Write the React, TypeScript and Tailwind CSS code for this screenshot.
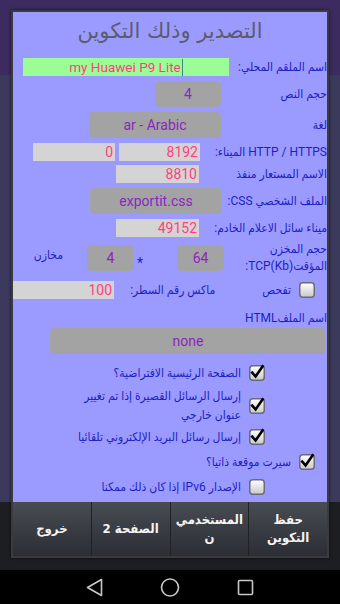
import React from "react";

function Check({ checked }: { checked: boolean }) {
  return (
    <svg width="16" height="16" viewBox="0 0 16 16" className="shrink-0 overflow-visible">
      <defs>
        <linearGradient id="cbg" x1="0" y1="0" x2="0" y2="1">
          <stop offset="0" stopColor="#ffffff" />
          <stop offset="1" stopColor="#c9c9c9" />
        </linearGradient>
      </defs>
      <rect x="0.75" y="0.75" width="14.5" height="14.5" rx="3" fill="url(#cbg)" stroke="#6a6a7a" strokeWidth="1.5" />
      {checked && (
        <path d="M3.2 7.6 L6.6 11.4 L13.6 1.4" fill="none" stroke="#000" strokeWidth="2.6" strokeLinecap="square" />
      )}
    </svg>
  );
}

const label = "text-[12px] leading-[16px] text-[#1e1ec4] whitespace-nowrap";
const grayBox = "flex h-[26px] shrink-0 items-center justify-center rounded-[5px] bg-[#a3a3a3] text-[14px] text-[#8a26c0]";
const input = "flex h-[18px] shrink-0 items-center justify-end bg-[#d4d4d4] pr-[2px] text-[14px] text-[#ff3f7f]";

export default function App() {
  return (
    <div className="relative h-[604px] w-[340px] overflow-hidden font-[family-name:Roboto,'DejaVu_Sans_Condensed','DejaVu_Sans',sans-serif]">
      {/* background */}
      <div className="flex h-full flex-col">
        <div className="h-[75px] bg-[#3c2b5f]" />
        <div className="flex-1 bg-[#3b3a5d]" />
        <div className="h-[68px] bg-[#1d1e22]" />
        <div className="flex h-[34px] items-center bg-black">
          <svg width="340" height="34" viewBox="0 0 340 34">
            <path d="M101.5 9.5 L101.5 25.5 L87.5 17.5 Z" fill="none" stroke="#c8c8c8" strokeWidth="1.6" strokeLinejoin="round" />
            <circle cx="170" cy="17.5" r="8.5" fill="none" stroke="#c8c8c8" strokeWidth="1.6" />
            <rect x="238.5" y="10.5" width="14" height="14" rx="1" fill="none" stroke="#c8c8c8" strokeWidth="1.6" />
          </svg>
        </div>
      </div>

      {/* dialog */}
      <div dir="rtl" className="absolute left-[11px] top-[10px] w-[318px] border-2 border-[#3b3b3f] shadow-[0_0_3px_rgba(0,0,0,0.6)]">
        <div className="flex h-[490px] flex-col bg-[#9b9bff]">
          <div className="flex h-[40px] items-center justify-center font-[family-name:'DejaVu_Sans',sans-serif] text-[21px] text-[#5c5c6c]">
            التصدير وذلك التكوين
          </div>

          {/* row 1 */}
          <div className="mt-[6px] flex h-[18px] items-center justify-between pl-[10px]">
            <span className={label}>اسم الملقم المحلي:</span>
            <div dir="ltr" className="flex h-[18px] w-[206px] items-center justify-center bg-[#9cfc96] text-[13.5px] text-[#ff3f7f]">
              <span>my Huawei P9 Lite</span>
              <span className="ml-[1px] h-[17px] w-[1px] bg-[#2e8f8a]" />
            </div>
          </div>

          {/* row 2 */}
          <div className="mt-[5px] flex h-[26px] items-center">
            <div className={`w-[106px] shrink-0 ${label}`}>حجم النص</div>
            <div className={`${grayBox} w-[66px]`}>4</div>
          </div>

          {/* row 3 */}
          <div className="mt-[5px] flex h-[26px] items-center">
            <div className={`w-[106px] shrink-0 ${label}`}>لغة</div>
            <div className={`${grayBox} w-[132px]`}>ar - Arabic</div>
          </div>

          {/* row 4 */}
          <div className="mt-[5px] flex h-[18px] items-center">
            <div className={`w-[127px] shrink-0 ${label}`}>HTTP / HTTPS الميناء:</div>
            <div dir="ltr" className={`${input} w-[81px]`}>8192</div>
            <div dir="ltr" className={`${input} mr-[4px] w-[82px]`}>0</div>
          </div>

          {/* row 5 */}
          <div className="mt-[4px] flex h-[18px] items-center">
            <div className={`w-[128px] shrink-0 ${label}`}>الاسم المستعار منفذ</div>
            <div dir="ltr" className={`${input} w-[83px]`}>8810</div>
          </div>

          {/* row 6 */}
          <div className="mt-[5px] flex h-[26px] items-center">
            <div className={`w-[105px] shrink-0 ${label}`}>الملف الشخصي CSS:</div>
            <div className={`${grayBox} w-[132px]`}>exportit.css</div>
          </div>

          {/* row 7 */}
          <div className="mt-[5px] flex h-[18px] items-center">
            <div className={`w-[128px] shrink-0 ${label}`}>ميناء سائل الاعلام الخادم:</div>
            <div dir="ltr" className={`${input} w-[83px]`}>49152</div>
          </div>

          {/* row 8 */}
          <div className="mt-[8px] flex h-[26px] items-center">
            <div className="w-[103px] shrink-0 whitespace-nowrap text-[12px] leading-[17px] text-[#1e1ec4]">
              حجم المخزن
              <br />
              المؤقتTCP(Kb):
            </div>
            <div className={`${grayBox} w-[47px]`}>64</div>
            <div className="flex h-[26px] w-[43px] shrink-0 items-end justify-end pb-[1px] pl-[3px] text-[14px] leading-[14px] text-[#1e1ec4]">
              *
            </div>
            <div className={`${grayBox} w-[47px]`}>4</div>
            <div className={`mr-[24px] self-start pt-[2px] ${label}`}>مخازن</div>
          </div>

          {/* row 9 */}
          <div className="mt-[10px] flex h-[18px] items-center">
            <div className="mr-[12px]">
              <Check checked={false} />
            </div>
            <span className={`mr-[8px] ${label}`}>تفحص</span>
            <span className={`mr-[47px] ${label}`}>ماكس رقم السطر:</span>
            <div dir="ltr" className={`${input} mr-auto w-[101px]`}>100</div>
          </div>

          {/* row 10 */}
          <div className="mt-[11px] flex h-[16px] items-center">
            <span className={label}>اسم الملفHTML</span>
          </div>

          {/* row 11 */}
          <div className="mt-[2px] flex h-[26px] items-center pr-[1px]">
            <div className={`${grayBox} w-[276px]`}>none</div>
          </div>

          {/* checkbox rows */}
          <div className="mt-[8px] flex h-[22px] items-center">
            <div className="mr-[62px]">
              <Check checked />
            </div>
            <span className={`mr-[8px] ${label}`}>الصفحة الرئيسية الافتراضية؟</span>
          </div>

          <div className="mt-[3px] flex h-[38px] items-center">
            <div className="mr-[62px]">
              <Check checked />
            </div>
            <span className="mr-[8px] whitespace-nowrap text-[12px] leading-[19px] text-[#1e1ec4]">
              إرسال الرسائل القصيرة إذا تم تغيير
              <br />
              عنوان خارجي
            </span>
          </div>

          <div className="mt-[3px] flex h-[18px] items-center">
            <div className="mr-[62px]">
              <Check checked />
            </div>
            <span className={`mr-[8px] ${label}`}>إرسال رسائل البريد الإلكتروني تلقائيا</span>
          </div>

          <div className="mt-[7px] flex h-[18px] items-center">
            <div className="mr-[12px]">
              <Check checked />
            </div>
            <span className={`mr-[8px] ${label}`}>سيرت موقعة ذاتيا؟</span>
          </div>

          <div className="mt-[7px] flex h-[18px] items-center">
            <div className="mr-[62px]">
              <Check checked={false} />
            </div>
            <span className={`mr-[8px] ${label}`}>الإصدار IPv6 إذا كان ذلك ممكنا</span>
          </div>
        </div>

        {/* buttons */}
        <div className="flex h-[54px] bg-[#26282c]">
          {[
            ["حفظ", "التكوين"],
            ["المستخدمي", "ن"],
            ["الصفحة 2"],
            ["خروج"],
          ].map((lines, i) => (
            <div
              key={i}
              className={`flex flex-1 flex-col items-center justify-center bg-gradient-to-b from-[#484c53] to-[#2b2e34] font-[family-name:'DejaVu_Sans_Condensed','DejaVu_Sans',sans-serif] text-[13px] font-bold leading-[18px] text-[#f4f4f4] ${
                i > 0 ? "border-r border-[#1f2124]" : ""
              }`}
            >
              {lines.map((l, j) => (
                <span key={j}>{l}</span>
              ))}
            </div>
          ))}
        </div>
      </div>
    </div>
  );
}
